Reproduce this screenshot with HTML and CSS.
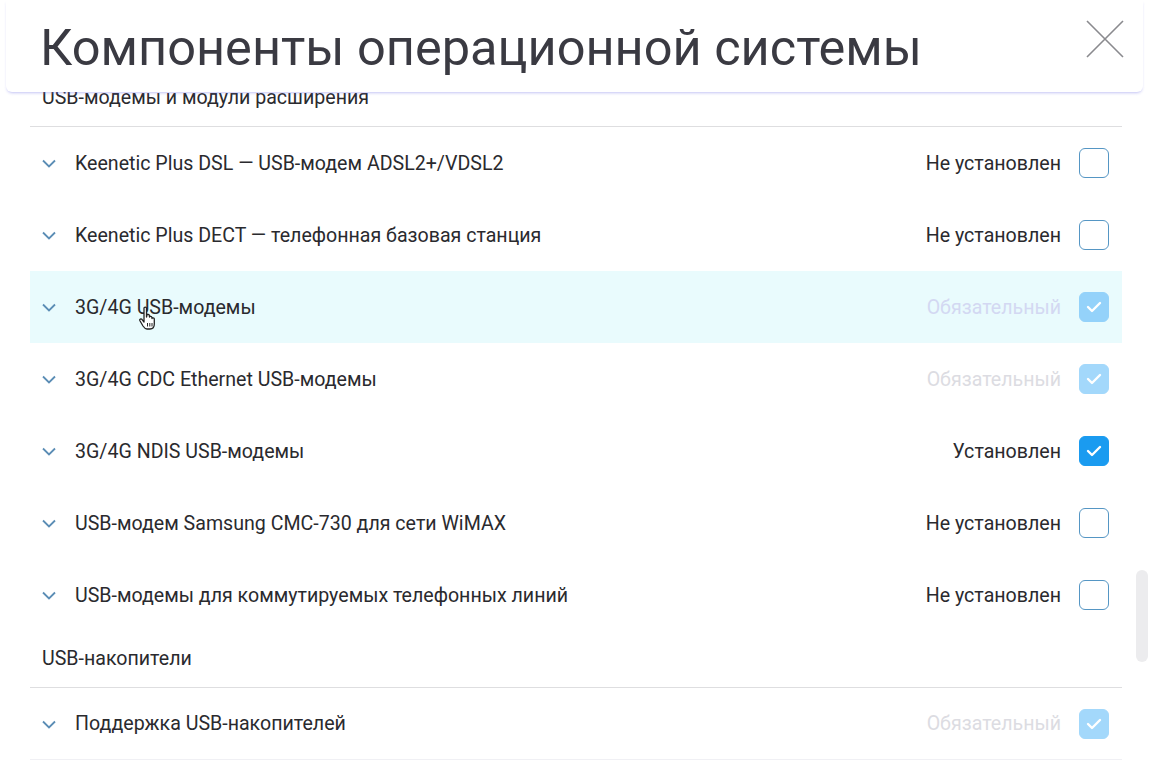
FILE: index.html
```html
<!DOCTYPE html>
<html lang="ru">
<head>
<meta charset="utf-8">
<title>Компоненты операционной системы</title>
<link rel="stylesheet" href="styles.css">
</head>
<body>
<div class="modal">
  <header class="modal-header">
    <h1 class="modal-title">Компоненты операционной системы</h1>
    <button class="close" aria-label="Закрыть">
      <svg width="38" height="38" viewBox="0 0 38 38"><path d="M1 1 L37 37 M37 1 L1 37" stroke="#8a8a8e" stroke-width="1.6" fill="none"/></svg>
    </button>
  </header>
  <main class="modal-body">
    <div class="list">
      <div class="group-title">USB-модемы и модули расширения</div>
      <div class="row">
        <span class="chev"><svg width="14" height="9" viewBox="0 0 14 9"><path d="M1 1.5 L7 7.5 L13 1.5" stroke="#5b8db5" stroke-width="1.8" fill="none"/></svg></span>
        <span class="name">Keenetic Plus DSL — USB-модем ADSL2+/VDSL2</span>
        <span class="status">Не установлен</span>
        <span class="cb"></span>
      </div>
      <div class="row">
        <span class="chev"><svg width="14" height="9" viewBox="0 0 14 9"><path d="M1 1.5 L7 7.5 L13 1.5" stroke="#5b8db5" stroke-width="1.8" fill="none"/></svg></span>
        <span class="name">Keenetic Plus DECT — телефонная базовая станция</span>
        <span class="status">Не установлен</span>
        <span class="cb"></span>
      </div>
      <div class="row hover">
        <span class="chev"><svg width="14" height="9" viewBox="0 0 14 9"><path d="M1 1.5 L7 7.5 L13 1.5" stroke="#5b8db5" stroke-width="1.8" fill="none"/></svg></span>
        <span class="name">3G/4G USB-модемы</span>
        <span class="status req">Обязательный</span>
        <span class="cb disabled"><svg width="16" height="12" viewBox="0 0 16 12"><path d="M2 6 L6 10 L14 2" stroke="#fff" stroke-width="2.4" fill="none" stroke-linecap="round" stroke-linejoin="round"/></svg></span>
        <svg class="cursor" width="22" height="26" viewBox="0 0 22 26"><path d="M6 2 C6 0.8 8.5 0.8 8.5 2 L8.5 11 L9 9 C9 8 11.3 8 11.3 9.2 L11.5 11 C11.5 10 13.8 10 13.8 11.2 L14 12.5 C14 11.5 16.3 11.5 16.3 12.8 L16.3 18 C16.3 21 14.5 23 12 23 L9 23 C7 23 6 21.5 5 20 L1.8 14.5 C1.2 13.3 3 12.3 3.9 13.3 L6 16 Z" fill="#fff" stroke="#222" stroke-width="1.3" stroke-linejoin="round"/><path d="M9.5 17 V20.5 M11.8 17 V20.5 M14 17 V20.5" stroke="#222" stroke-width="1"/></svg>
      </div>
      <div class="row">
        <span class="chev"><svg width="14" height="9" viewBox="0 0 14 9"><path d="M1 1.5 L7 7.5 L13 1.5" stroke="#5b8db5" stroke-width="1.8" fill="none"/></svg></span>
        <span class="name">3G/4G CDC Ethernet USB-модемы</span>
        <span class="status req">Обязательный</span>
        <span class="cb disabled"><svg width="16" height="12" viewBox="0 0 16 12"><path d="M2 6 L6 10 L14 2" stroke="#fff" stroke-width="2.4" fill="none" stroke-linecap="round" stroke-linejoin="round"/></svg></span>
      </div>
      <div class="row">
        <span class="chev"><svg width="14" height="9" viewBox="0 0 14 9"><path d="M1 1.5 L7 7.5 L13 1.5" stroke="#5b8db5" stroke-width="1.8" fill="none"/></svg></span>
        <span class="name">3G/4G NDIS USB-модемы</span>
        <span class="status">Установлен</span>
        <span class="cb checked"><svg width="16" height="12" viewBox="0 0 16 12"><path d="M2 6 L6 10 L14 2" stroke="#fff" stroke-width="2.4" fill="none" stroke-linecap="round" stroke-linejoin="round"/></svg></span>
      </div>
      <div class="row">
        <span class="chev"><svg width="14" height="9" viewBox="0 0 14 9"><path d="M1 1.5 L7 7.5 L13 1.5" stroke="#5b8db5" stroke-width="1.8" fill="none"/></svg></span>
        <span class="name">USB-модем Samsung CMC-730 для сети WiMAX</span>
        <span class="status">Не установлен</span>
        <span class="cb"></span>
      </div>
      <div class="row">
        <span class="chev"><svg width="14" height="9" viewBox="0 0 14 9"><path d="M1 1.5 L7 7.5 L13 1.5" stroke="#5b8db5" stroke-width="1.8" fill="none"/></svg></span>
        <span class="name">USB-модемы для коммутируемых телефонных линий</span>
        <span class="status">Не установлен</span>
        <span class="cb"></span>
      </div>
      <div class="group-title">USB-накопители</div>
      <div class="row last">
        <span class="chev"><svg width="14" height="9" viewBox="0 0 14 9"><path d="M1 1.5 L7 7.5 L13 1.5" stroke="#5b8db5" stroke-width="1.8" fill="none"/></svg></span>
        <span class="name">Поддержка USB-накопителей</span>
        <span class="status req">Обязательный</span>
        <span class="cb disabled"><svg width="16" height="12" viewBox="0 0 16 12"><path d="M2 6 L6 10 L14 2" stroke="#fff" stroke-width="2.4" fill="none" stroke-linecap="round" stroke-linejoin="round"/></svg></span>
      </div>
    </div>
    <div class="scroll-thumb"></div>
  </main>
</div>
</body>
</html>
```
FILE: styles.css
```css
* { box-sizing: border-box; }
html, body { margin: 0; padding: 0; background: #fff; }
body {
  font-family: Roboto, "Noto Sans", "Liberation Sans", sans-serif;
  color: #2a2a2e;
  width: 1149px;
  height: 762px;
  overflow: hidden;
}
.modal {
  display: flex;
  flex-direction: column;
  height: 762px;
}
.modal-header {
  position: relative;
  z-index: 2;
  flex: none;
  height: 92px;
  margin: 0 6px;
  background: #fff;
  display: flex;
  align-items: flex-start;
  justify-content: space-between;
  padding: 0 19px 0 34px;
  box-shadow: 0 2px 3px -1px rgba(120, 120, 230, 0.45);
  border-radius: 0 0 6px 6px;
}
.modal-title {
  margin: 0;
  padding-top: 17px;
  font-size: 50.5px;
  font-weight: 400;
  line-height: 62px;
  color: #3a3a42;
  white-space: nowrap;
}
.close {
  margin-top: 20px;
  padding: 0;
  border: 0;
  background: transparent;
  width: 38px;
  height: 38px;
  display: flex;
}
.modal-body {
  position: relative;
  flex: 1;
  overflow: hidden;
}
.list {
  margin: -22px 27px 0 30px;
}
.group-title {
  height: 57px;
  padding: 17px 12px 17px 12px;
  font-size: 19.6px;
  line-height: 22px;
  color: #2a2a2e;
  border-bottom: 1px solid #dedee0;
  white-space: nowrap;
}
.row {
  position: relative;
  height: 72px;
  display: flex;
  align-items: center;
  padding: 0 13px 0 12px;
  font-size: 19.6px;
}
.row.hover { background: #e9fbfd; }
.row.last { border-bottom: 1px solid #f0f0f4; }
.chev {
  width: 33px;
  display: flex;
  align-items: center;
  padding-top: 1px;
}
.name {
  flex: 1;
  color: #2a2a2e;
}
.status {
  color: #2a2a2e;
  margin-right: 18px;
}
.status.req { color: #dcdce2; }
.row.hover .status.req { color: #d3d8f2; }
.cb {
  width: 30px;
  height: 30px;
  border: 1.6px solid #5596c4;
  border-radius: 6px;
  display: flex;
  align-items: center;
  justify-content: center;
  background: #fff;
}
.cb.checked {
  background: #1a9bf0;
  border-color: #1a9bf0;
}
.cb.disabled {
  background: #a3d8fb;
  border-color: #a3d8fb;
}
.row.hover .cb.disabled { background: #94d2fa; border-color: #94d2fa; }
.cursor {
  position: absolute;
  left: 108px;
  top: 35px;
}
.scroll-thumb {
  position: absolute;
  right: 1px;
  top: 478px;
  width: 12px;
  height: 92px;
  border-radius: 6px;
  background: #ececee;
}
```
